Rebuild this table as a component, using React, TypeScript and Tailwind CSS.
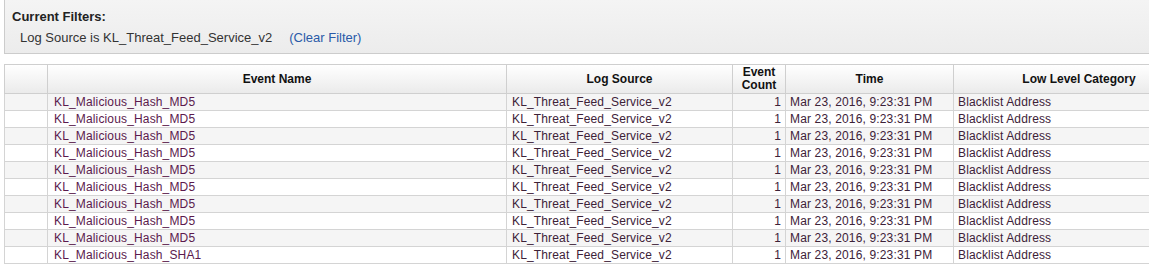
import React from "react";

const rows = [
  "KL_Malicious_Hash_MD5",
  "KL_Malicious_Hash_MD5",
  "KL_Malicious_Hash_MD5",
  "KL_Malicious_Hash_MD5",
  "KL_Malicious_Hash_MD5",
  "KL_Malicious_Hash_MD5",
  "KL_Malicious_Hash_MD5",
  "KL_Malicious_Hash_MD5",
  "KL_Malicious_Hash_MD5",
  "KL_Malicious_Hash_SHA1",
];

export default function App() {
  return (
    <div
      className="w-[1149px] h-[264px] overflow-hidden bg-white text-[12px] text-[#3d2238]"
      style={{ fontFamily: '"Liberation Sans", Arial, sans-serif' }}
    >
      <div className="ml-[4px] h-[54px] border-l border-b border-[#cccccc] bg-gradient-to-b from-[#f4f4f4] to-[#ececec] pl-[7px] pt-[9px] text-[13px]">
        <div className="font-bold text-[#222] leading-[15px]">Current Filters:</div>
        <div className="mt-[6px] pl-[8px] leading-[15px] text-[#333]">
          Log Source is KL_Threat_Feed_Service_v2
          <span className="ml-[17px] text-[#2a5aa8]">(Clear Filter)</span>
        </div>
      </div>
      <div className="mt-[10px] ml-[4px] w-[1300px]">
        <table className="table-fixed border-collapse w-[1200px]">
          <colgroup>
            <col className="w-[43px]" />
            <col className="w-[459px]" />
            <col className="w-[226px]" />
            <col className="w-[53px]" />
            <col className="w-[168px]" />
            <col className="w-[251px]" />
          </colgroup>
          <thead>
            <tr className="h-[29px] bg-gradient-to-b from-[#ffffff] to-[#eaeaea] text-[#111] font-bold">
              <th className="border border-[#cfcfcf] p-0"></th>
              <th className="border border-[#cfcfcf] p-0 text-center">Event Name</th>
              <th className="border border-[#cfcfcf] p-0 text-center">Log Source</th>
              <th className="border border-[#cfcfcf] p-0 text-center leading-[13px]">
                Event
                <br />
                Count
              </th>
              <th className="border border-[#cfcfcf] p-0 text-center">Time</th>
              <th className="border border-[#cfcfcf] p-0 text-center">Low Level Category</th>
            </tr>
          </thead>
          <tbody className="tracking-[0.15px]">
            {rows.map((name, i) => (
              <tr key={i} className={`h-[17px] leading-[14px] ${i % 2 === 0 ? "bg-[#f5f5f5]" : "bg-white"}`}>
                <td className="border border-[#d4d4d4] p-0"></td>
                <td className="border border-[#d4d4d4] p-0 pl-[6px] text-[#5b1a4d] whitespace-nowrap">{name}</td>
                <td className="border border-[#d4d4d4] p-0 pl-[5px] whitespace-nowrap">KL_Threat_Feed_Service_v2</td>
                <td className="border border-[#d4d4d4] p-0 pr-[4px] text-right">1</td>
                <td className="border border-[#d4d4d4] p-0 pl-[4px] whitespace-nowrap">Mar 23, 2016, 9:23:31 PM</td>
                <td className="border border-[#d4d4d4] p-0 pl-[4px] whitespace-nowrap">Blacklist Address</td>
              </tr>
            ))}
          </tbody>
        </table>
      </div>
    </div>
  );
}
